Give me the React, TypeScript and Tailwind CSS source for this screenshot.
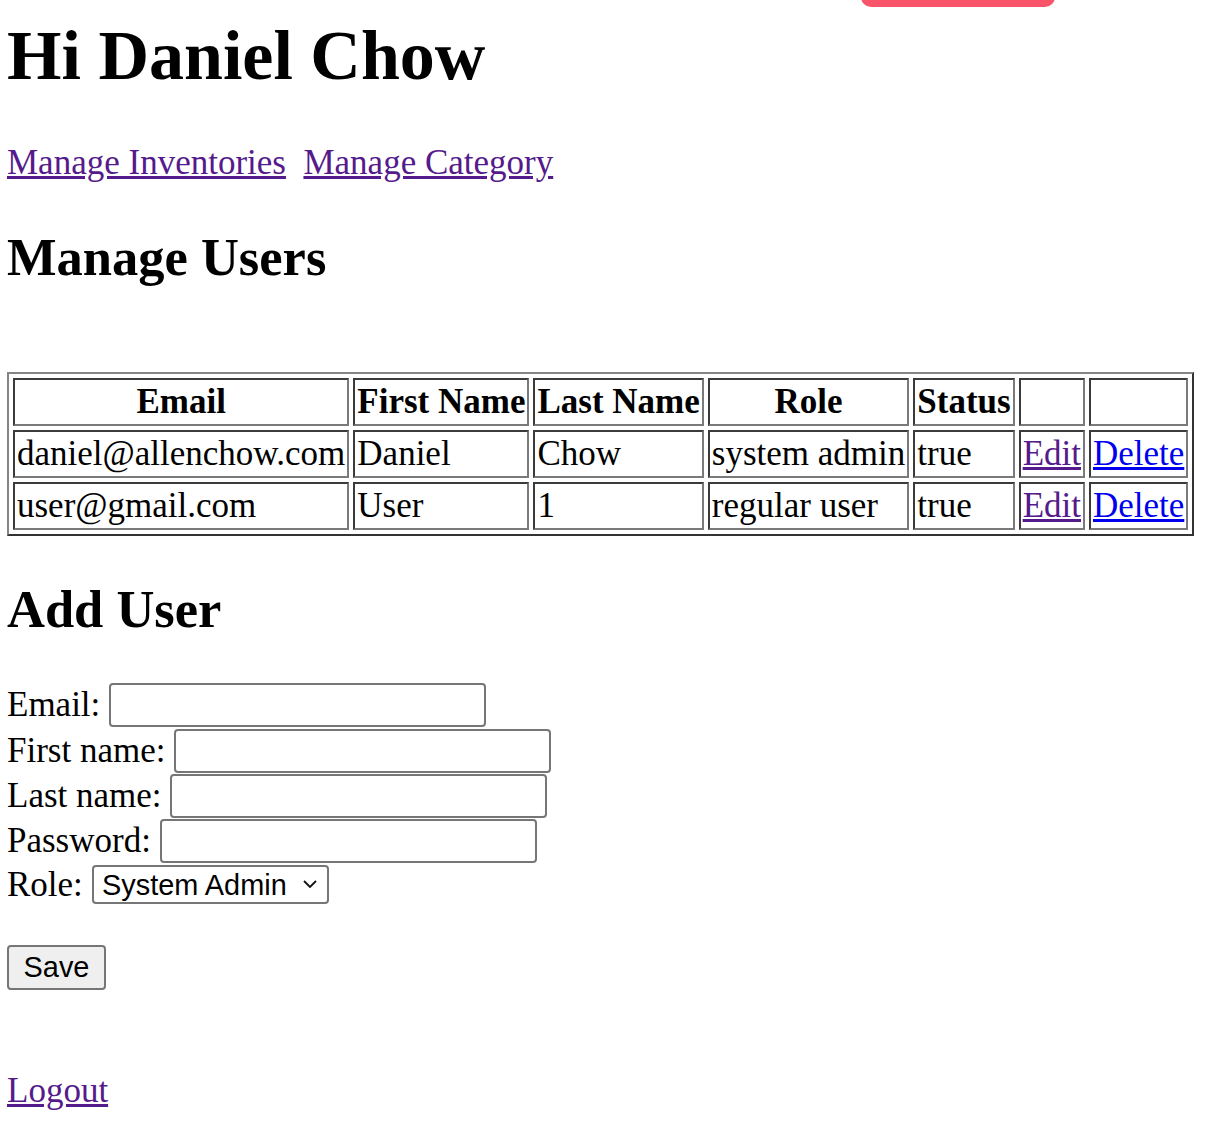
const cell =
  "border-2 border-t-[#3b3b3b] border-l-[#3b3b3b] border-b-[#7a7a7a] border-r-[#7a7a7a] p-[2px] align-middle";

const users = [
  { email: "daniel@allenchow.com", first: "Daniel", last: "Chow", role: "system admin", status: "true" },
  { email: "user@gmail.com", first: "User", last: "1", role: "regular user", status: "true" },
];

const fields = ["Email", "First name", "Last name", "Password"];

export default function App() {
  return (
    <div className="relative min-h-[1136px] overflow-hidden bg-white px-[7px] pt-[16px] font-['Liberation_Serif',serif] text-[35px] leading-[normal] text-black">
      <div className="absolute left-[861px] top-[-20px] h-[27px] w-[194px] rounded-[10px] bg-[#f9546a]" />

      <h1 className="mb-[46.5px] text-[70px] font-bold">Hi Daniel Chow</h1>

      <p className="mb-[44.5px]">
        <a href="#" className="text-[#551a8b] underline">
          Manage Inventories
        </a>
        {"\u00a0 "}
        <a href="#" className="text-[#551a8b] underline">
          Manage Category
        </a>
      </p>

      <h2 className="mb-[84.8px] text-[52.5px] font-bold">Manage Users</h2>

      <table className="border-separate border-spacing-[4.33px] border-2 border-t-[#858585] border-l-[#858585] border-b-[#333333] border-r-[#333333]">
        <thead>
          <tr>
            <th className={`${cell} text-center font-bold`}>Email</th>
            <th className={`${cell} text-center font-bold`}>First Name</th>
            <th className={`${cell} text-center font-bold`}>Last Name</th>
            <th className={`${cell} text-center font-bold`}>Role</th>
            <th className={`${cell} text-center font-bold`}>Status</th>
            <th className={cell}></th>
            <th className={cell}></th>
          </tr>
        </thead>
        <tbody>
          {users.map((u) => (
            <tr key={u.email}>
              <td className={cell}>{u.email}</td>
              <td className={cell}>{u.first}</td>
              <td className={cell}>{u.last}</td>
              <td className={cell}>{u.role}</td>
              <td className={cell}>{u.status}</td>
              <td className={cell}>
                <a href="#" className="text-[#551a8b] underline">
                  Edit
                </a>
              </td>
              <td className={cell}>
                <a href="#" className="text-[#0000ee] underline">
                  Delete
                </a>
              </td>
            </tr>
          ))}
        </tbody>
      </table>

      <h2 className="mb-[43.6px] mt-[43.2px] text-[52.5px] font-bold">Add User</h2>

      <form onSubmit={(e) => e.preventDefault()}>
        {fields.map((f) => (
          <div key={f} className="flex h-[45.4px] items-center">
            <span>{f}:</span>
            <span className="w-[8.75px]" />
            <input
              type={f === "Password" ? "password" : "text"}
              className="h-[44px] w-[377px] rounded-[4px] border-2 border-[#767676] bg-white px-[4px] font-['Liberation_Sans',Arial,sans-serif] text-[28.9px] outline-none"
            />
          </div>
        ))}
        <div className="flex h-[41px] items-center">
          <span>Role:</span>
          <span className="w-[8.75px]" />
          <div className="relative flex">
            <select className="h-[38.3px] w-[237px] appearance-none rounded-[4px] border-2 border-[#767676] bg-white pl-[8.5px] font-['Liberation_Sans',Arial,sans-serif] text-[28.9px] text-black outline-none">
              <option>System Admin</option>
              <option>Regular User</option>
            </select>
            <svg
              className="pointer-events-none absolute right-[11px] top-[14px]"
              width="16"
              height="10"
              viewBox="0 0 16 10"
              fill="none"
            >
              <path d="M2 2l6 6 6-6" stroke="#111" strokeWidth="1.8" />
            </svg>
          </div>
        </div>

        <button
          type="submit"
          className="mt-[40px] h-[45px] w-[99px] rounded-[4px] border-2 border-[#767676] bg-[#efefef] font-['Liberation_Sans',Arial,sans-serif] text-[28.9px] text-black"
        >
          Save
        </button>
      </form>

      <p className="mt-[81px]">
        <a href="#" className="text-[#551a8b] underline">
          Logout
        </a>
      </p>
    </div>
  );
}
